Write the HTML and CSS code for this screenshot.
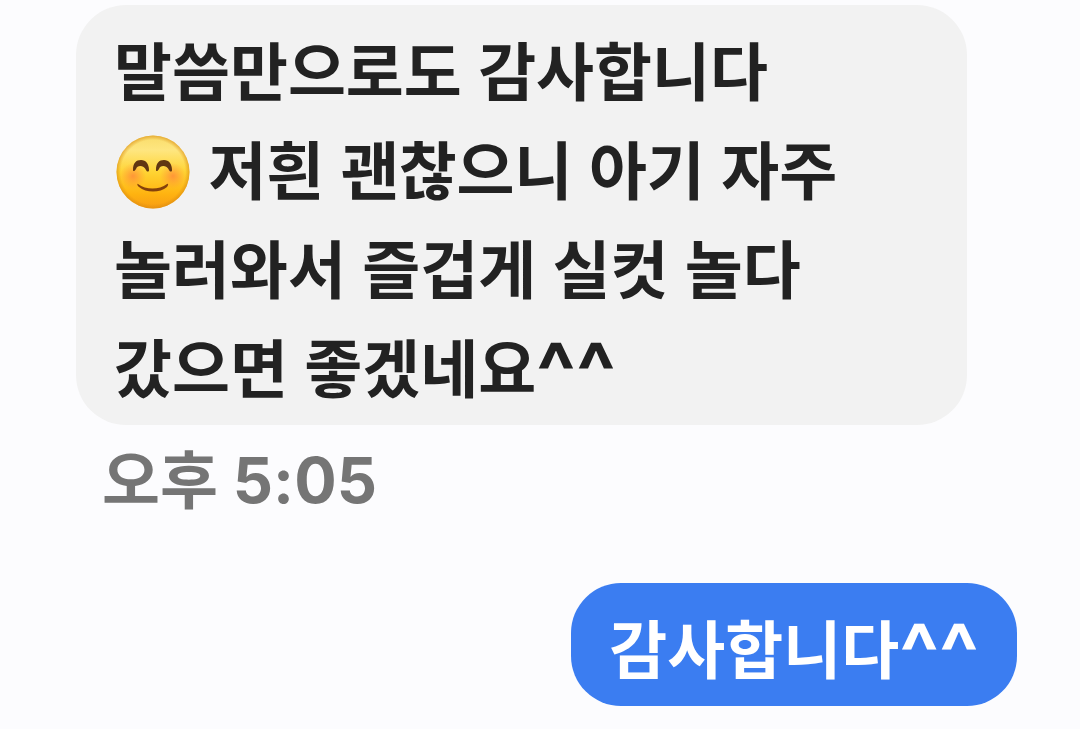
FILE: index.html
```html
<!DOCTYPE html>
<html lang="ko">
<head>
<meta charset="utf-8">
<meta name="viewport" content="width=device-width, initial-scale=1">
<title>메시지</title>
<link rel="stylesheet" href="styles.css">
</head>
<body>
<main class="chat">
  <article class="message received">
    <p class="bubble">말씀만으로도 감사합니다<br><svg class="emoji" viewBox="0 0 74 74" role="img" aria-label="미소">
      <defs>
        <linearGradient id="face" x1="0" y1="0" x2="0" y2="1">
          <stop offset="0" stop-color="#f9dc6a"/>
          <stop offset="0.2" stop-color="#fee680"/>
          <stop offset="0.5" stop-color="#ffd433"/>
          <stop offset="0.8" stop-color="#ffb310"/>
          <stop offset="1" stop-color="#f79c12"/>
        </linearGradient>
        <radialGradient id="rim">
          <stop offset="0.88" stop-color="#d98a10" stop-opacity="0"/>
          <stop offset="1" stop-color="#d98a10" stop-opacity="0.6"/>
        </radialGradient>
        <radialGradient id="blush">
          <stop offset="0" stop-color="#ff7e3c" stop-opacity="0.7"/>
          <stop offset="1" stop-color="#ff8a3c" stop-opacity="0"/>
        </radialGradient>
      </defs>
      <circle cx="37" cy="37" r="36.5" fill="url(#face)"/>
      <circle cx="37" cy="37" r="36.5" fill="url(#rim)"/>
      <circle cx="17" cy="41" r="13" fill="url(#blush)"/>
      <circle cx="57" cy="41" r="13" fill="url(#blush)"/>
      <g fill="#603612">
        <path d="M17 35C17 28 20 25 25 25S33 29 33 35C33 37 31 37 30 35C28 30 21 30 20 34C19 36 17 37 17 35Z"/>
        <path d="M40 35C40 28 43 25 48 25S56 29 56 35C56 37 54 37 53 35C51 30 44 30 43 34C42 36 40 37 40 35Z"/>
      </g>
      <path d="M22 49C30 55 43 55 51 49C53 48 52 51 51 52C44 58 30 58 23 52C21 51 21 48 22 49Z" fill="#84410c"/>
    </svg> 저흰 괜찮으니 아기 자주<br>놀러와서 즐겁게 실컷 놀다<br>갔으면 좋겠네요<span class="smile">^^</span></p>
    <time class="time" datetime="17:05">오후 5:05</time>
  </article>
  <article class="message sent">
    <p class="bubble">감사합니다<span class="smile">^^</span></p>
  </article>
</main>
</body>
</html>
```
FILE: styles.css
```css
* { box-sizing: border-box; }
body {
  margin: 0;
  background: #fcfcfe;
  color: #222;
  font-family: "Noto Sans", "Noto Sans CJK KR", sans-serif;
  font-size: 63px;
  font-weight: 700;
}
.chat {
  display: flex;
  flex-direction: column;
  gap: 52px;
  padding: 5px 63px 20px 76px;
}
.message { display: flex; flex-direction: column; }
.received { align-items: flex-start; }
.sent { align-items: flex-end; }
.bubble {
  margin: 0;
  padding: 16px 38px 8px;
  line-height: 99px;
  white-space: nowrap;
}
.received .bubble {
  width: 100%;
  max-width: 891px;
  border-radius: 50px;
  background: #f2f2f2;
}
.sent .bubble {
  border-radius: 50px;
  background: #3b7df1;
  color: #fff;
}
.emoji {
  width: 74px;
  height: 74px;
  margin: 0 2px;
  vertical-align: -15px;
}
.smile {
  font-family: Inter, sans-serif;
  font-size: 82px;
  line-height: 0;
  vertical-align: -9px;
}
.time {
  margin: 4px 0 0 26px;
  color: #757575;
  font-family: Inter, "Noto Sans CJK KR", sans-serif;
  line-height: 102px;
}
```
